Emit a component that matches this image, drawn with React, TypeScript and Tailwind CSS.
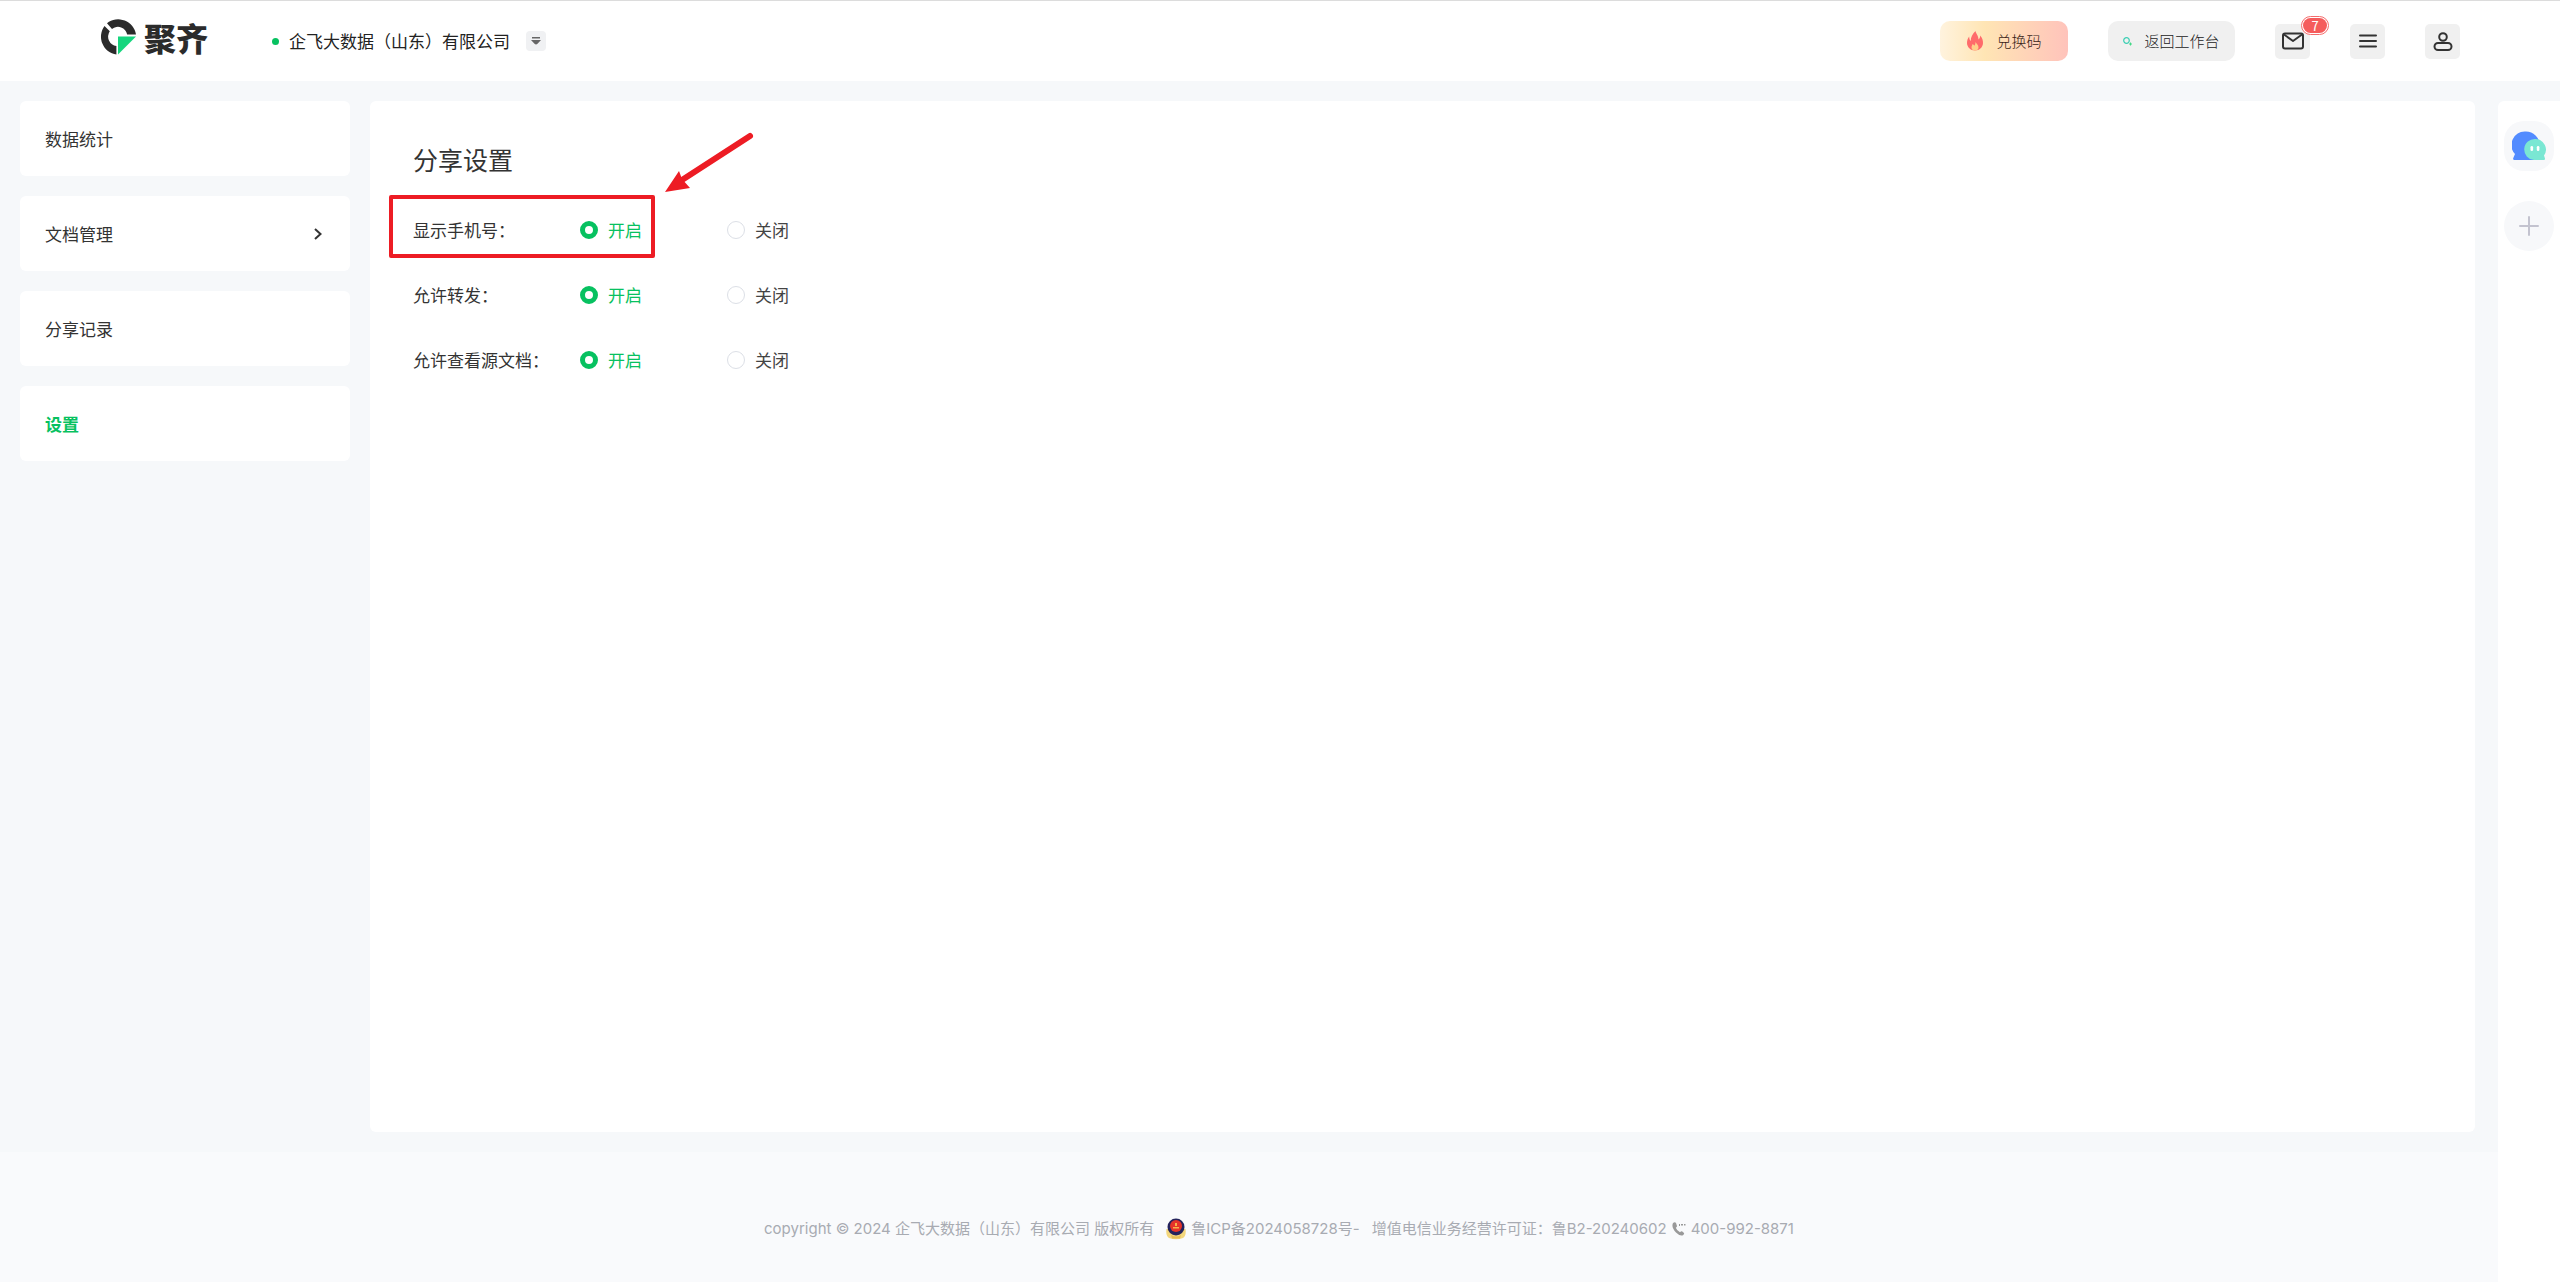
import React, { useState } from "react";

const navItems = [
  { label: "数据统计" },
  { label: "文档管理", expandable: true },
  { label: "分享记录" },
  { label: "设置", active: true },
];

const settings = [
  { id: "phone", label: "显示手机号：", marked: true },
  { id: "forward", label: "允许转发：" },
  { id: "source", label: "允许查看源文档：" },
];

function Logo() {
  return (
    <a href="#home" className="flex items-center gap-2 text-[#2b2b2b]" aria-label="聚齐">
      <svg width="36" height="36" viewBox="0 0 36 36" fill="none">
        <path d="M7 4.200A18 18 0 0 1 36 15.500H27.200A9.400 9.400 0 0 0 12 10Z" fill="#2b2b2b" />
        <path d="M4.500 7A18 18 0 0 0 16.400 35.500V27A9.400 9.400 0 0 1 9.800 12.300Z" fill="#2b2b2b" />
        <path d="M18 17.500H36L18 35.500Z" fill="#16d67e" />
      </svg>
      <span className="text-[32px] leading-8 font-black">聚齐</span>
    </a>
  );
}

function Header() {
  return (
    <header className="flex h-[81px] shrink-0 items-center border-t border-[#dcdcdc] bg-white px-[100px]">
      <div className="pb-2">
        <Logo />
      </div>
      <div className="ml-16 flex items-center">
        <span className="size-[7px] rounded-full bg-[#07c160]" />
        <span className="ml-[10px] text-[17px] text-[#222]">企飞大数据（山东）有限公司</span>
        <button className="ml-4 flex size-5 items-center justify-center rounded-sm bg-[#f0f1f3]" aria-label="切换企业">
          <svg width="10" height="8" viewBox="0 0 10 8" fill="#666">
            <path d="M1 0h8v1.5H1zM0 3h10L6.5 6.8Q5 8 3.5 6.8Z" />
          </svg>
        </button>
      </div>
      <div className="ml-auto flex items-center gap-10">
        <button className="flex h-10 w-32 items-center justify-center gap-3 rounded-[10px] bg-linear-to-r from-[#fff3de] via-[#ffe5b4] via-35% to-[#ffc3bb] text-[15px] font-light text-[#3a1f18]">
          <svg width="18" height="20" viewBox="0 0 18 20">
            <path d="M9.500 0c0 2 3 4.500 3 8.500 1-1 1.700-2 1.700-4C16.500 7 17 9.500 17 12c0 4-3.500 7.500-8 7.500S1 16 1 12c0-2.500.7-4.500 2.200-6.500 0 2 .5 3.500 1.500 4.500C4.700 6 6.500 3 9.500 0Z" fill="#ff6b6b" />
            <path d="M9.500 11c1 2 3 3 3 5.500 0 2-1.500 3-3.500 3s-3.500-1-3.500-3c0-1.500.8-2 1-3.500 1 .5 1.500 1 1.800 1.800.7-1 1.200-2 1.200-3.800Z" fill="#ffd08a" />
          </svg>
          兑换码
        </button>
        <button className="flex h-10 w-[127px] items-center justify-center gap-3 rounded-[10px] bg-[#f0f0f0] text-[15px] font-light text-[#222]">
          <svg width="9" height="9" viewBox="0 0 9 9" fill="none">
            <circle cx="3.500" cy="3.500" r="2.800" stroke="#3ccfb4" strokeWidth="1.200" />
            <path d="M7.500 5.500v3M6 7h3" stroke="#42d986" strokeWidth="1" />
          </svg>
          返回工作台
        </button>
        <button className="relative flex size-[35px] items-center justify-center rounded-[5px] bg-[#f0f0f0]" aria-label="消息">
          <svg width="22" height="18" viewBox="0 0 22 18" fill="none" stroke="#333" strokeWidth="2" strokeLinejoin="round">
            <rect x="1" y="1.500" width="20" height="15" rx="2" />
            <path d="M2 2.500 11 9l9-6.500" />
          </svg>
          <span className="absolute -top-2 left-[26px] flex h-[19px] w-7 items-center justify-center rounded-full border border-[#f56c6c] bg-white p-px">
            <span className="flex h-full w-full items-center justify-center rounded-full bg-[#f55c5c] text-[13px] leading-none text-white">7</span>
          </span>
        </button>
        <button className="flex size-[35px] items-center justify-center rounded-[5px] bg-[#f0f0f0]" aria-label="菜单">
          <svg width="18" height="14" viewBox="0 0 18 14" stroke="#333" strokeWidth="2" strokeLinecap="round">
            <path d="M1 1.500h16M1 7h16M1 12.500h16" />
          </svg>
        </button>
        <button className="flex size-[35px] items-center justify-center rounded-[5px] bg-[#f0f0f0]" aria-label="个人中心">
          <svg width="20" height="19" viewBox="0 0 20 19" fill="none" stroke="#333" strokeWidth="2">
            <circle cx="10" cy="5" r="3.800" />
            <rect x="1.500" y="11" width="17" height="7" rx="3.500" />
          </svg>
        </button>
      </div>
    </header>
  );
}

function Sidebar() {
  return (
    <nav className="flex w-[330px] shrink-0 flex-col gap-5">
      {navItems.map((item) => (
        <button
          key={item.label}
          className={
            item.active
              ? "flex h-[75px] items-center justify-between rounded-md bg-white px-[25px] text-[17px] font-bold text-[#07c160]"
              : "flex h-[75px] items-center justify-between rounded-md bg-white px-[25px] text-[17px] text-[#333]"
          }
        >
          {item.label}
          {item.expandable && (
            <svg width="14" height="14" viewBox="0 0 14 14" fill="none" stroke="#333" strokeWidth="2">
              <path d="m4 2 5.500 5L4 12" />
            </svg>
          )}
        </button>
      ))}
    </nav>
  );
}

function SettingRow({ id, label, marked }: { id: string; label: string; marked?: boolean }) {
  const [on, setOn] = useState(true);
  const options = [
    { text: "开启", value: true },
    { text: "关闭", value: false },
  ];
  return (
    <div
      role="radiogroup"
      aria-labelledby={id}
      className="relative flex h-[65px] items-center text-[17px] text-[#333]"
    >
      <span id={id} className="w-[167px]">{label}</span>
      {options.map((option) => (
        <label
          key={option.text}
          className={
            on === option.value
              ? "flex w-[147px] items-center gap-[10px] text-[#07c160]"
              : "flex w-[147px] items-center gap-[10px] text-[#444]"
          }
        >
          <input
            type="radio"
            name={id}
            checked={on === option.value}
            onChange={() => setOn(option.value)}
            className="size-[18px] appearance-none rounded-full border border-[#dcdfe6] bg-white checked:border-[5px] checked:border-[#07c160]"
          />
          {option.text}
        </label>
      ))}
      {marked && (
        <>
          <span className="pointer-events-none absolute -top-0.5 -left-6 h-[63px] w-[266px] rounded-[2px] border-4 border-[#ed1c24]" />
          <svg className="pointer-events-none absolute -top-[65px] left-[252px]" width="90" height="60" viewBox="0 0 90 60">
            <path d="M85 4 17 48" stroke="#ed1c24" strokeWidth="6" strokeLinecap="round" />
            <path d="M0 60 14 39 17 47 25 56Z" fill="#ed1c24" />
          </svg>
        </>
      )}
    </div>
  );
}

function Footer() {
  return (
    <footer className="flex h-[130px] shrink-0 items-center justify-center bg-[#f9fafc] pt-6 pl-[60px] font-['Inter','Noto_Sans_CJK_SC',sans-serif] text-[15px] whitespace-pre text-[#a8abb2]">
      <span>copyright © 2024 企飞大数据（山东）有限公司 版权所有</span>
      <a href="#icp" className="ml-3 flex items-center gap-[5px]">
        <svg width="20" height="22" viewBox="0 0 20 22">
          <path d="M.5 11Q-.5 18 3 20Q10 22.500 17 20Q20.500 18 19.500 11Z" fill="#f3d67c" />
          <circle cx="10" cy="9" r="8.500" fill="#25235c" />
          <circle cx="10" cy="8" r="6" fill="#e5332a" />
          <path d="M7 9h6v1.500H7zM9 5h2v3H9z" fill="#f7b24a" />
          <path d="M5 17Q10 20 15 17L14 20.500H6Z" fill="#e6bd55" />
        </svg>
        鲁ICP备2024058728号-
      </a>
      <span className="ml-3">增值电信业务经营许可证：鲁B2-20240602</span>
      <svg className="mx-[5px]" width="14" height="14" viewBox="0 0 14 14" fill="#999">
        <path d="M1 1Q3-.5 4 1L5 4Q5 5 3.800 5.800Q5 9 8 10.200Q9 9 10 9.200L12 11Q12.500 12 11 13.300Q8 14.500 4 10.500Q-1 5 1 1ZM7 2h1v2H7zM9 2h2v1.500H9zM12 2h1.500v1.500H12z" />
      </svg>
      <a href="tel:400-992-8871">400-992-8871</a>
    </footer>
  );
}

function Dock() {
  return (
    <aside className="mt-5 flex w-[62px] shrink-0 flex-col items-center gap-[30px] rounded-tl-md bg-white pt-5">
      <button className="flex size-[50px] items-center justify-center rounded-[20px] bg-[#f7f8fa]" aria-label="聊天">
        <svg width="34" height="30" viewBox="0 0 34 30">
          <path d="M14 .5A13.500 13.500 0 0 1 27.500 14V29H2Q.5 28.500 1.500 26.500L3 23A13.500 13.500 0 0 1 14 .5Z" fill="#528bff" />
          <path d="M23.500 8A10.500 10.500 0 0 1 32 24.500L33 27.500Q33 29 32 29H22A10.500 10.500 0 0 1 23.500 8Z" fill="#7ae7d3" />
          <rect x="18.500" y="15" width="2.600" height="5" rx="1.300" fill="#fff" />
          <rect x="24.800" y="15" width="2.600" height="5" rx="1.300" fill="#fff" />
        </svg>
      </button>
      <button className="flex size-[50px] items-center justify-center rounded-full bg-[#f7f8fa]" aria-label="添加">
        <svg width="20" height="20" viewBox="0 0 20 20" stroke="#c3c3cf" strokeWidth="2" strokeLinecap="round">
          <path d="M10 1v18M1 10h18" />
        </svg>
      </button>
    </aside>
  );
}

export default function App() {
  return (
    <div className="flex min-h-screen flex-col bg-[#f6f8fa] font-['Noto_Sans_CJK_SC',sans-serif]">
      <Header />
      <div className="flex flex-1">
        <div className="flex min-w-0 flex-1 flex-col">
          <div className="flex flex-1 gap-5 py-5 pr-[23px] pl-5">
            <Sidebar />
            <main className="flex-1 rounded-md bg-white px-[43px] pt-10">
              <h1 className="text-[25px] leading-9 text-[#333]">分享设置</h1>
              <div className="mt-5">
                {settings.map((row) => (
                  <SettingRow key={row.id} {...row} />
                ))}
              </div>
            </main>
          </div>
          <Footer />
        </div>
        <Dock />
      </div>
    </div>
  );
}
